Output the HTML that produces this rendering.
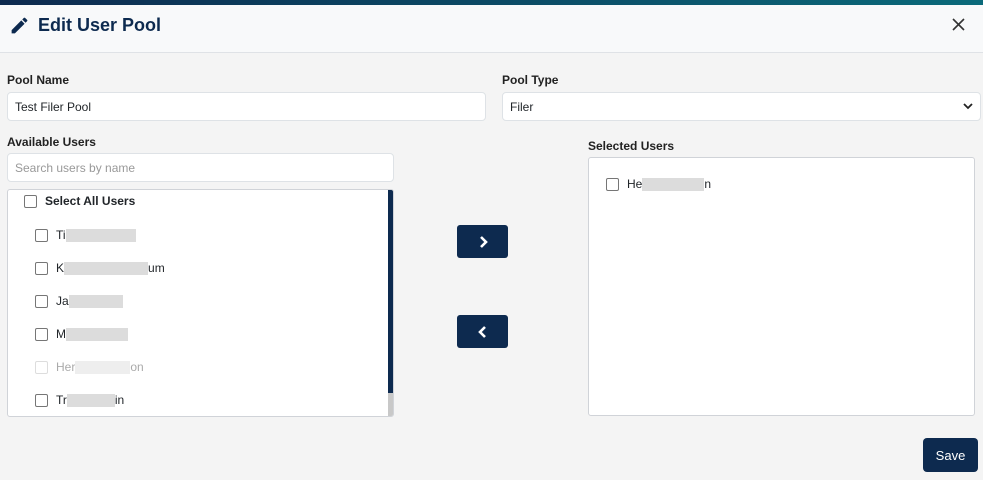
<!DOCTYPE html>
<html><head><style>
body{margin:0;width:983px;height:480px;background:#f4f4f4;font-family:"Liberation Sans",sans-serif;position:relative;overflow:hidden;color:#212529}
.top{position:absolute;left:0;top:0;width:983px;height:5px;background:linear-gradient(90deg,#0d2a4f,#0b6a7a)}
.hdr{position:absolute;left:0;top:5px;width:983px;height:47px;background:#f8f9fa;border-bottom:1px solid #dfe2e6}
.hdr h1{position:absolute;left:38px;top:10px;margin:0;font-size:18px;font-weight:bold;color:#0d2a4f}
.lbl{position:absolute;font-size:12px;font-weight:bold;color:#222}
.inp{position:absolute;background:#fff;border:1px solid #dee2e6;border-radius:4px;box-sizing:border-box;font-size:12px;padding:0 7px;display:flex;align-items:center}
.list{position:absolute;left:7px;top:189px;width:387px;height:228px;background:#fff;border:1px solid #d0d3d8;border-radius:3px;box-sizing:border-box;overflow:hidden}
.sb{position:absolute;right:0;top:0;width:5px;height:228px;background:#c8c8c8}
.sb div{width:5px;height:203px;background:#0d2a4f}
.it{position:absolute;left:27px;font-size:12px;display:flex;align-items:center}
.cb{width:11px;height:11px;border:1px solid #767676;border-radius:2px;margin-right:8px;background:#fff}
.blur{display:inline-block;height:13px;background:#dcdcdc;vertical-align:middle}
.btn{position:absolute;left:457px;width:51px;height:33px;background:#0d2a4f;border-radius:3px;color:#fff;display:flex;align-items:center;justify-content:center}
.sel{position:absolute;left:588px;top:157px;width:387px;height:259px;background:#fff;border:1px solid #d0d3d8;border-radius:3px;box-sizing:border-box}
.save{position:absolute;left:923px;top:438px;width:55px;height:34px;background:#0d2a4f;border-radius:4px;color:#fff;font-size:13px;display:flex;align-items:center;justify-content:center}
</style></head><body>
<div class="top"></div>
<div class="hdr">
<svg style="position:absolute;left:9px;top:10px" width="21" height="21" viewBox="0 0 24 24"><path fill="#0d2a4f" d="M3 17.25V21h3.75L17.81 9.94l-3.75-3.75L3 17.25zM20.71 7.04a1 1 0 0 0 0-1.41l-2.34-2.34a1 1 0 0 0-1.41 0l-1.83 1.83 3.75 3.75 1.83-1.83z"/></svg>
<h1>Edit User Pool</h1>
<svg style="position:absolute;left:952px;top:13px" width="13" height="13" viewBox="0 0 13 13"><path d="M1 1l11 11M12 1L1 12" stroke="#333" stroke-width="1.6"/></svg></div>
<div class="lbl" style="left:7px;top:73px">Pool Name</div>
<div class="inp" style="left:7px;top:92px;width:479px;height:29px">Test Filer Pool</div>
<div class="lbl" style="left:502px;top:73px">Pool Type</div>
<div class="inp" style="left:502px;top:92px;width:479px;height:29px;justify-content:space-between">Filer<svg width="10" height="7" viewBox="0 0 10 7"><path d="M1 1l4 4 4-4" stroke="#222" stroke-width="1.8" fill="none"/></svg></div>
<div class="lbl" style="left:7px;top:135px">Available Users</div>
<div class="inp" style="left:7px;top:153px;width:387px;height:29px;color:#999">Search users by name</div>
<div class="list"><div class="sb"><div></div></div>
<div class="it" style="top:4px;left:16px;font-weight:bold"><span class="cb"></span>Select All Users</div>
<div class="it" style="top:38px"><span class="cb"></span>Ti<span class="blur" style="width:70px"></span></div>
<div class="it" style="top:71px"><span class="cb"></span>K<span class="blur" style="width:84px"></span>um</div>
<div class="it" style="top:104px"><span class="cb"></span>Ja<span class="blur" style="width:54px"></span></div>
<div class="it" style="top:137px"><span class="cb"></span>M<span class="blur" style="width:62px"></span></div>
<div class="it" style="top:170px;color:#aaa"><span class="cb" style="border-color:#ddd"></span>Her<span class="blur" style="width:55px;background:#eee"></span>on</div>
<div class="it" style="top:203px"><span class="cb"></span>Tr<span class="blur" style="width:48px"></span>in</div>
</div>
<div class="btn" style="top:225px"><svg width="10" height="14" viewBox="0 0 10 14"><path d="M3 2l5 5-5 5" stroke="#fff" stroke-width="2.6" fill="none"/></svg></div>
<div class="btn" style="top:315px"><svg width="10" height="14" viewBox="0 0 10 14"><path d="M7 2L2 7l5 5" stroke="#fff" stroke-width="2.6" fill="none"/></svg></div>
<div class="lbl" style="left:588px;top:139px">Selected Users</div>
<div class="sel"><div class="it" style="top:19px;left:17px"><span class="cb"></span>He<span class="blur" style="width:62px"></span>n</div></div>
<div class="save">Save</div>
</body></html>
